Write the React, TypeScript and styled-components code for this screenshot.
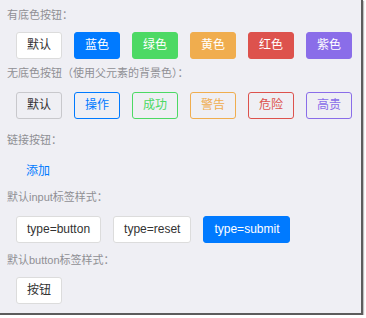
import styled, { createGlobalStyle } from 'styled-components';

const GlobalStyle = createGlobalStyle`
  html, body {
    margin: 0;
    padding: 0;
    background: #ffffff;
  }
  body {
    font-family: 'Liberation Sans', 'Noto Sans CJK SC', sans-serif;
  }
`;

const Frame = styled.div`
  width: 361px;
  height: 313px;
  box-sizing: border-box;
  padding-top: 6px;
  background-color: #efeff4;
  border-right: 2px solid #5c5c5c;
  border-bottom: 2px solid #5c5c5c;
  box-shadow: 1px 1px 1px rgba(0, 0, 0, 0.25);
  display: flex;
  flex-direction: column;
  box-sizing: content-box;
  height: 307px;
`;

const Title = styled.h5`
  margin: 0;
  padding-left: 7px;
  font-size: 11px;
  font-weight: normal;
  line-height: 18px;
  color: #8f8f94;
`;

const Row = styled.div<{ $top: number; $bottom: number }>`
  display: flex;
  gap: 12px;
  padding-left: 16px;
  margin-top: ${(p) => p.$top}px;
  margin-bottom: ${(p) => p.$bottom}px;
`;

const palette: Record<string, string> = {
  default: '#cccccc',
  primary: '#007aff',
  success: '#4cd964',
  warning: '#f0ad4e',
  danger: '#dd524d',
  royal: '#8a6de9',
};

type Kind = keyof typeof palette;

const Button = styled.button<{ $kind: Kind; $outlined?: boolean }>`
  height: 27px;
  box-sizing: border-box;
  padding: 0 10px;
  font-family: inherit;
  font-size: 12px;
  line-height: 25px;
  border-radius: 3px;
  border: 1px solid
    ${(p) => (p.$kind === 'default' ? (p.$outlined ? '#c8c8cc' : '#dcdcdc') : palette[p.$kind])};
  background-color: ${(p) =>
    p.$outlined ? 'transparent' : p.$kind === 'default' ? '#ffffff' : palette[p.$kind]};
  color: ${(p) =>
    p.$kind === 'default' ? '#333333' : p.$outlined ? palette[p.$kind] : '#ffffff'};
  cursor: pointer;
`;

const LinkButton = styled.button`
  height: 27px;
  padding: 0 10px;
  border: none;
  background: none;
  font-family: inherit;
  font-size: 12px;
  color: #007aff;
  cursor: pointer;
`;

const filled: [Kind, string][] = [
  ['default', '默认'],
  ['primary', '蓝色'],
  ['success', '绿色'],
  ['warning', '黄色'],
  ['danger', '红色'],
  ['royal', '紫色'],
];

const outlined: [Kind, string][] = [
  ['default', '默认'],
  ['primary', '操作'],
  ['success', '成功'],
  ['warning', '警告'],
  ['danger', '危险'],
  ['royal', '高贵'],
];

const App = () => {
  return (
    <>
      <GlobalStyle />
      <Frame>
        <Title>有底色按钮：</Title>
        <Row $top={8} $bottom={5}>
          {filled.map(([kind, label]) => (
            <Button key={kind} $kind={kind}>{label}</Button>
          ))}
        </Row>
        <Title>无底色按钮（使用父元素的背景色）：</Title>
        <Row $top={10} $bottom={12}>
          {outlined.map(([kind, label]) => (
            <Button key={kind} $kind={kind} $outlined>{label}</Button>
          ))}
        </Row>
        <Title>链接按钮：</Title>
        <Row $top={7} $bottom={5}>
          <LinkButton>添加</LinkButton>
        </Row>
        <Title>默认input标签样式：</Title>
        <Row $top={10} $bottom={8}>
          <Button as="input" type="button" value="type=button" $kind="default" />
          <Button as="input" type="reset" value="type=reset" $kind="default" />
          <Button as="input" type="submit" value="type=submit" $kind="primary" />
        </Row>
        <Title>默认button标签样式：</Title>
        <Row $top={8} $bottom={0}>
          <Button $kind="default">按钮</Button>
        </Row>
      </Frame>
    </>
  );
};

export default App;
